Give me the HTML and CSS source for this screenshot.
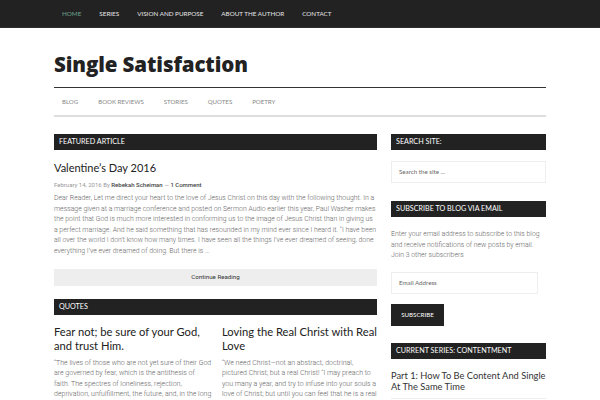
FILE: index.html
```html
<!DOCTYPE html>
<html>
<head>
<meta charset="utf-8">
<link rel="stylesheet" href="styles.css">
</head>
<body>
<div class="topbar">
  <ul class="topnav">
    <li class="active">Home</li>
    <li>Series</li>
    <li>Vision and Purpose</li>
    <li>About the Author</li>
    <li>Contact</li>
  </ul>
</div>
<div class="site">
  <header class="header">
    <h1 class="site-title">Single Satisfaction</h1>
  </header>
  <nav class="subnav">
    <ul>
      <li>Blog</li>
      <li>Book Reviews</li>
      <li>Stories</li>
      <li>Quotes</li>
      <li>Poetry</li>
    </ul>
  </nav>
  <div class="inner">
    <main class="content">
      <section class="widget">
        <h4 class="wtitle">Featured Article</h4>
        <h2 class="entry-title">Valentine’s Day 2016</h2>
        <p class="meta">February 14, 2016 By <b>Rebekah Scheiman</b> — <b>1 Comment</b></p>
        <p class="text">Dear Reader, Let me direct your heart to the love of Jesus Christ on this day with the following thought. In a message given at a marriage conference and posted on Sermon Audio earlier this year, Paul Washer makes the point that God is much more interested in conforming us to the image of Jesus Christ than in giving us a perfect marriage. And he said something that has resounded in my mind ever since I heard it. “I have been all over the world I don’t know how many times. I have seen all the things I’ve ever dreamed of seeing, done everything I’ve ever dreamed of doing. But there is …</p>
        <div class="more">Continue Reading</div>
      </section>
      <section class="widget">
        <h4 class="wtitle">Quotes</h4>
        <div class="cols">
          <article class="col">
            <h3 class="qtitle">Fear not; be sure of your God, and trust Him.</h3>
            <p class="text qtext">“The lives of those who are not yet sure of their God<br>are governed by fear, which is the antithesis of<br>faith. The spectres of loneliness, rejection,<br>deprivation, unfulfillment, the future, and, in the long<br>run, death itself …</p>
          </article>
          <article class="col">
            <h3 class="qtitle">Loving the Real Christ with Real Love</h3>
            <p class="text qtext">“We need Christ—not an abstract, doctrinal,<br>pictured Christ; but a real Christ! “I may preach to<br>you many a year, and try to infuse into your souls a<br>love of Christ; but until you can feel that he is a real<br>man …</p>
          </article>
        </div>
      </section>
    </main>
    <aside class="sidebar">
      <section class="widget">
        <h4 class="wtitle">Search Site:</h4>
        <div class="input">Search the site …</div>
      </section>
      <section class="widget">
        <h4 class="wtitle">Subscribe to Blog via Email</h4>
        <p class="text side-text first">Enter your email address to subscribe to this blog and receive notifications of new posts by email.</p>
        <p class="text side-text">Join 3 other subscribers</p>
        <div class="input email">Email Address</div>
        <div class="btn">Subscribe</div>
      </section>
      <section class="widget">
        <h4 class="wtitle">Current Series: Contentment</h4>
        <h3 class="series-title">Part 1: How To Be Content And Single At The Same Time</h3>
        <div class="series-line"></div>
      </section>
    </aside>
  </div>
</div>
</body>
</html>
```
FILE: styles.css
```css
* { box-sizing: border-box; }
html, body { margin: 0; padding: 0; background: #fff; }
body { font-family: Roboto, "Liberation Sans", sans-serif; color: #666; overflow: hidden; height: 400px; }
ul { list-style: none; margin: 0; padding: 0; }
h1, h2, h3, h4, p { margin: 0; font-weight: normal; }

.topbar { background: #222; height: 28px; border-bottom: 1px solid #2e2e2e; }
.topnav { display: flex; padding-left: 53px; height: 27px; align-items: center; }
.topnav li { font-family: Lato, "Open Sans", sans-serif; font-size: 6.3px; font-weight: 400; text-transform: uppercase; color: #e6e6e6; padding: 0 9px; }
.topnav li.active { color: #6fa38f; }

.site { width: 492px; margin: 0 auto; }
.header { height: 59px; display: flex; align-items: center; }
.site-title { font-family: "Open Sans", Lato, sans-serif; font-weight: 800; font-size: 20.5px; color: #222; letter-spacing: -0.1px; padding-top: 12px; }

.subnav { border-top: 1px solid #333; border-bottom: 2px solid #ddd; height: 30px; }
.subnav ul { display: flex; height: 27px; align-items: center; }
.subnav li { font-family: Lato, "Open Sans", sans-serif; font-size: 6.1px; text-transform: uppercase; color: #888; padding: 0 10px; }
.subnav li:first-child { padding-left: 8px; }

.inner { display: flex; gap: 14px; margin-top: 17px; }
.content { width: 323px; flex: none; }
.sidebar { width: 155px; flex: none; }

.wtitle { background: #222; color: #fff; height: 16px; line-height: 16px; font-family: Lato, "Open Sans", sans-serif; font-size: 7.2px; text-transform: uppercase; padding-left: 5px; }

.content .widget { margin-bottom: 13px; }
.entry-title { font-family: Lato, "Open Sans", sans-serif; font-size: 11px; color: #222; margin-top: 10px; line-height: 15px; }
.meta { font-size: 6px; color: #999; margin-top: 5px; line-height: 10px; }
.meta b { font-weight: 500; color: #444; }
.text { font-size: 6.9px; line-height: 10.6px; font-weight: 300; color: #666; }
.content .text { margin-top: 3px; }
.more { background: #eee; height: 17px; line-height: 17px; text-align: center; font-size: 6.2px; color: #333; margin-top: 12px; }

.cols { display: flex; gap: 10px; }
.col { width: 158px; flex: none; }
.col + .col { width: 155px; }
.qtitle { font-family: Lato, "Open Sans", sans-serif; font-size: 11.2px; line-height: 14.5px; color: #222; margin-top: 10px; }
.content .qtext { margin-top: 4px; font-size: 7px; white-space: nowrap; }

.sidebar .widget { margin-bottom: 17px; }
.sidebar .widget:first-child { margin-bottom: 18px; }
.input { border: 1px solid #eee; height: 22px; line-height: 20px; font-size: 6.2px; color: #666; padding-left: 7px; margin-top: 11px; font-family: Lato, sans-serif; }
.side-text.first { margin-top: 12px; }
.input.email { width: 147px; margin-top: 11px; }
.btn { background: #222; color: #fff; width: 53px; height: 22px; line-height: 22px; text-align: center; font-family: Lato, sans-serif; font-size: 6.2px; text-transform: uppercase; margin-top: 10px; }
.series-title { font-family: Lato, "Open Sans", sans-serif; font-size: 9.3px; line-height: 11px; color: #333; margin-top: 11px; }
.series-line { border-top: 1px solid #eee; margin-top: 6px; }
```
